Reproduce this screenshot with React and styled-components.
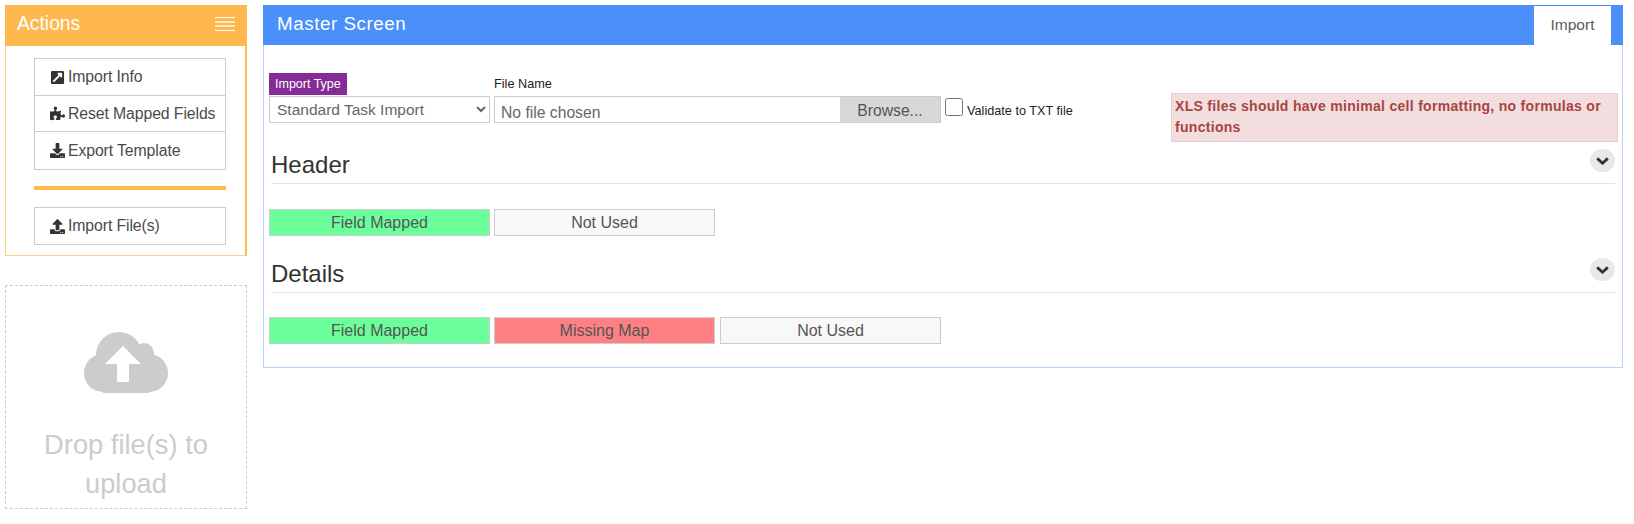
import styled, { createGlobalStyle } from 'styled-components'
import { FaExternalLinkSquareAlt, FaPuzzlePiece, FaDownload, FaUpload } from 'react-icons/fa'

const GlobalStyle = createGlobalStyle`
  * { box-sizing: border-box; }
  html, body { margin: 0; background: #fff; }
  body {
    font-family: "Liberation Sans", Arial, sans-serif;
    color: #333;
  }
`

const Page = styled.div`
  display: flex;
  align-items: flex-start;
  gap: 16px;
  width: 1634px;
  height: 524px;
  padding: 5px 11px 0 5px;
  overflow: hidden;
`

const Sidebar = styled.aside`
  display: flex;
  flex-direction: column;
  gap: 29px;
  flex: 0 0 242px;
`

const ActionsPanel = styled.section`
  height: 251px;
  border: 1px solid #ffcf87;
  border-right: 2px solid #ffb84d;
`

const ActionsHeader = styled.header`
  display: flex;
  align-items: center;
  justify-content: space-between;
  height: 41px;
  margin: -1px -2px 0 -1px;
  padding: 0 12px 3px 12px;
  background: #ffb84d;
  color: #fff;
  font-size: 19.3px;
`

const ActionsBody = styled.div`
  padding: 12px 19px 0 28px;
`

const ButtonGroup = styled.div`
  display: flex;
  flex-direction: column;
`

const ActionButton = styled.div`
  display: flex;
  align-items: center;
  gap: 3px;
  height: ${(p) => p.$height}px;
  margin-top: ${(p) => (p.$first ? 0 : -1)}px;
  padding-left: 15px;
  border: 1px solid #ccc;
  font-size: 15.8px;
  color: #4a4a4a;
  white-space: nowrap;
  letter-spacing: -0.1px;
  svg { flex: none; color: #333; font-size: 15px; }
`

const Divider = styled.hr`
  height: 4px;
  margin: 16px 0 17px;
  border: 0;
  background: #ffb84d;
`

const DropZone = styled.div`
  display: flex;
  flex-direction: column;
  align-items: center;
  height: 224px;
  padding: 46px 20px 0;
  border: 1px dashed #ccc;
  color: #ccc;
  font-size: 27.3px;
  line-height: 39px;
  text-align: center;
  svg { margin-bottom: 32px; }
`

const MainPanel = styled.main`
  flex: 1;
  height: 363px;
  border: 1px solid #b9d3fd;
  border-top: 0;
`

const MainHeader = styled.header`
  display: flex;
  align-items: flex-end;
  justify-content: space-between;
  height: 40px;
  margin: 0 -1px;
  padding: 0 12px 0 14px;
  background: #4a8ffa;
`

const MainTitle = styled.h1`
  margin: 0 0 10px;
  color: #fff;
  font-size: 18.8px;
  font-weight: 400;
  letter-spacing: 0.55px;
`

const Tab = styled.div`
  width: 77px;
  height: 39px;
  background: #fff;
  color: #5c5c5c;
  font-size: 15.5px;
  line-height: 38px;
  text-align: center;
`

const Content = styled.div`
  padding: 28px 4px 0 5px;
`

const ImportRow = styled.div`
  display: flex;
  align-items: flex-start;
  gap: 4px;
  height: 69px;
`

const Field = styled.div`
  display: flex;
  flex-direction: column;
  width: ${(p) => p.$width}px;
`

const PurpleLabel = styled.span`
  align-self: flex-start;
  height: 22px;
  padding: 0 6px;
  background: #852a96;
  color: #fff;
  font-size: 12.5px;
  line-height: 22px;
`

const PlainLabel = styled.span`
  height: 22px;
  color: #222;
  font-size: 12.7px;
  line-height: 22px;
`

const ImportSelect = styled.select`
  width: 100%;
  height: 27px;
  margin-top: 1px;
  padding: 0 0 0 3px;
  border: 1px solid #ccc;
  border-radius: 0;
  background: #fff;
  color: #666;
  font-family: inherit;
  font-size: 15.5px;
`

const FileBox = styled.div`
  display: flex;
  align-items: stretch;
  height: 27px;
  margin-top: 1px;
  border: 1px solid #ccc;
`

const FileName = styled.span`
  flex: 1;
  padding: 7px 0 0 6px;
  color: #666;
  font-size: 15.7px;
  line-height: 18px;
`

const BrowseButton = styled.span`
  width: 100px;
  height: 25px;
  background: #d8d8d8;
  color: #555;
  font-size: 15.7px;
  line-height: 28px;
  text-align: center;
`

const ValidateLabel = styled.label`
  display: flex;
  align-items: flex-start;
  gap: 4px;
  margin-top: 25px;
  color: #222;
  font-size: 12.7px;
  input { width: 18px; height: 18px; margin: 0; }
  span { margin-top: 6px; }
`

const Alert = styled.div`
  width: 447px;
  height: 49px;
  margin: 20px 0 0 auto;
  padding: 2px 3px;
  border: 1px solid #ebcccc;
  background: #f2dede;
  color: #a94442;
  font-size: 14px;
  font-weight: 700;
  line-height: 21px;
  letter-spacing: 0.3px;
`

const SectionHeading = styled.div`
  display: flex;
  align-items: flex-end;
  justify-content: space-between;
  height: ${(p) => p.$height}px;
  margin: 0 3px 0 2px;
  padding-bottom: 3px;
  border-bottom: 1px solid #e5e5e5;
  h2 { margin: 0; color: #333; font-size: 24px; font-weight: 400; line-height: 30px; }
`

const Toggle = styled.span`
  display: flex;
  align-items: center;
  justify-content: center;
  width: 25px;
  height: 23px;
  margin-bottom: 8px;
  border-radius: 50%;
  background: #e8e8e8;
`

const LegendRow = styled.div`
  display: flex;
  gap: 4px;
  margin-top: ${(p) => p.$top}px;
`

const Legend = styled.div`
  width: 221px;
  height: 27px;
  margin-left: ${(p) => p.$offset ?? 0}px;
  border: 1px solid #ccc;
  background: ${(p) => p.$bg};
  color: #555;
  font-size: 16px;
  line-height: 25px;
  text-align: center;
`

const colors = { mapped: '#6bff9b', missing: '#ff8083', unused: '#f8f8f8' }

function MenuIcon() {
  return (
    <svg width="20" height="14" viewBox="0 0 20 14" aria-hidden="true">
      <g fill="#fff">
        <rect y="0" width="20" height="1" />
        <rect y="4" width="20" height="2" opacity=".7" />
        <rect y="8" width="20" height="2" opacity=".7" />
        <rect y="13" width="20" height="1" />
      </g>
    </svg>
  )
}

function Chevron() {
  return (
    <svg width="13" height="8" viewBox="0 0 13 8" aria-hidden="true">
      <path d="M1.2 1.4 L6.5 6.2 L11.8 1.4" fill="none" stroke="#333" strokeWidth="2.8" />
    </svg>
  )
}

// cloud traced from the reference, coordinates are the 3x crop divided by 3
function CloudIcon() {
  return (
    <svg width="84" height="61" viewBox="0 0 84 61" aria-hidden="true">
      <g fill="#ccc">
        <circle cx="35" cy="23" r="23" />
        <circle cx="60" cy="21" r="10" />
        <circle cx="19" cy="41" r="19" />
        <circle cx="65" cy="41" r="19" />
        <rect x="19" y="30" width="46" height="31" />
      </g>
      <path d="M39 14 L57 32 H45 V50 H33 V32 H21 Z" fill="#fff" />
    </svg>
  )
}

function App() {
  return (
    <>
      <GlobalStyle />
      <Page>
        <Sidebar>
          <ActionsPanel>
            <ActionsHeader>
              <span>Actions</span>
              <MenuIcon />
            </ActionsHeader>
            <ActionsBody>
              <ButtonGroup>
                <ActionButton $first $height={38}><FaExternalLinkSquareAlt />Import Info</ActionButton>
                <ActionButton $height={37}><FaPuzzlePiece />Reset Mapped Fields</ActionButton>
                <ActionButton $height={39}><FaDownload />Export Template</ActionButton>
              </ButtonGroup>
              <Divider />
              <ActionButton $first $height={38}><FaUpload />Import File(s)</ActionButton>
            </ActionsBody>
          </ActionsPanel>
          <DropZone>
            <CloudIcon />
            Drop file(s) to upload
          </DropZone>
        </Sidebar>

        <MainPanel>
          <MainHeader>
            <MainTitle>Master Screen</MainTitle>
            <Tab>Import</Tab>
          </MainHeader>
          <Content>
            <ImportRow>
              <Field $width={221}>
                <PurpleLabel>Import Type</PurpleLabel>
                <ImportSelect defaultValue="Standard Task Import">
                  <option>Standard Task Import</option>
                </ImportSelect>
              </Field>
              <Field $width={447}>
                <PlainLabel>File Name</PlainLabel>
                <FileBox>
                  <FileName>No file chosen</FileName>
                  <BrowseButton>Browse...</BrowseButton>
                </FileBox>
              </Field>
              <ValidateLabel>
                <input type="checkbox" />
                <span>Validate to TXT file</span>
              </ValidateLabel>
              <Alert>XLS files should have minimal cell formatting, no formulas or functions</Alert>
            </ImportRow>
            <SectionHeading $height={42}>
              <h2>Header</h2>
              <Toggle><Chevron /></Toggle>
            </SectionHeading>
            <LegendRow $top={25}>
              <Legend $bg={colors.mapped}>Field Mapped</Legend>
              <Legend $bg={colors.unused}>Not Used</Legend>
            </LegendRow>
            <SectionHeading $height={57}>
              <h2>Details</h2>
              <Toggle><Chevron /></Toggle>
            </SectionHeading>
            <LegendRow $top={24}>
              <Legend $bg={colors.mapped}>Field Mapped</Legend>
              <Legend $bg={colors.missing}>Missing Map</Legend>
              <Legend $bg={colors.unused} $offset={1}>Not Used</Legend>
            </LegendRow>
          </Content>
        </MainPanel>
      </Page>
    </>
  )
}

export default App
